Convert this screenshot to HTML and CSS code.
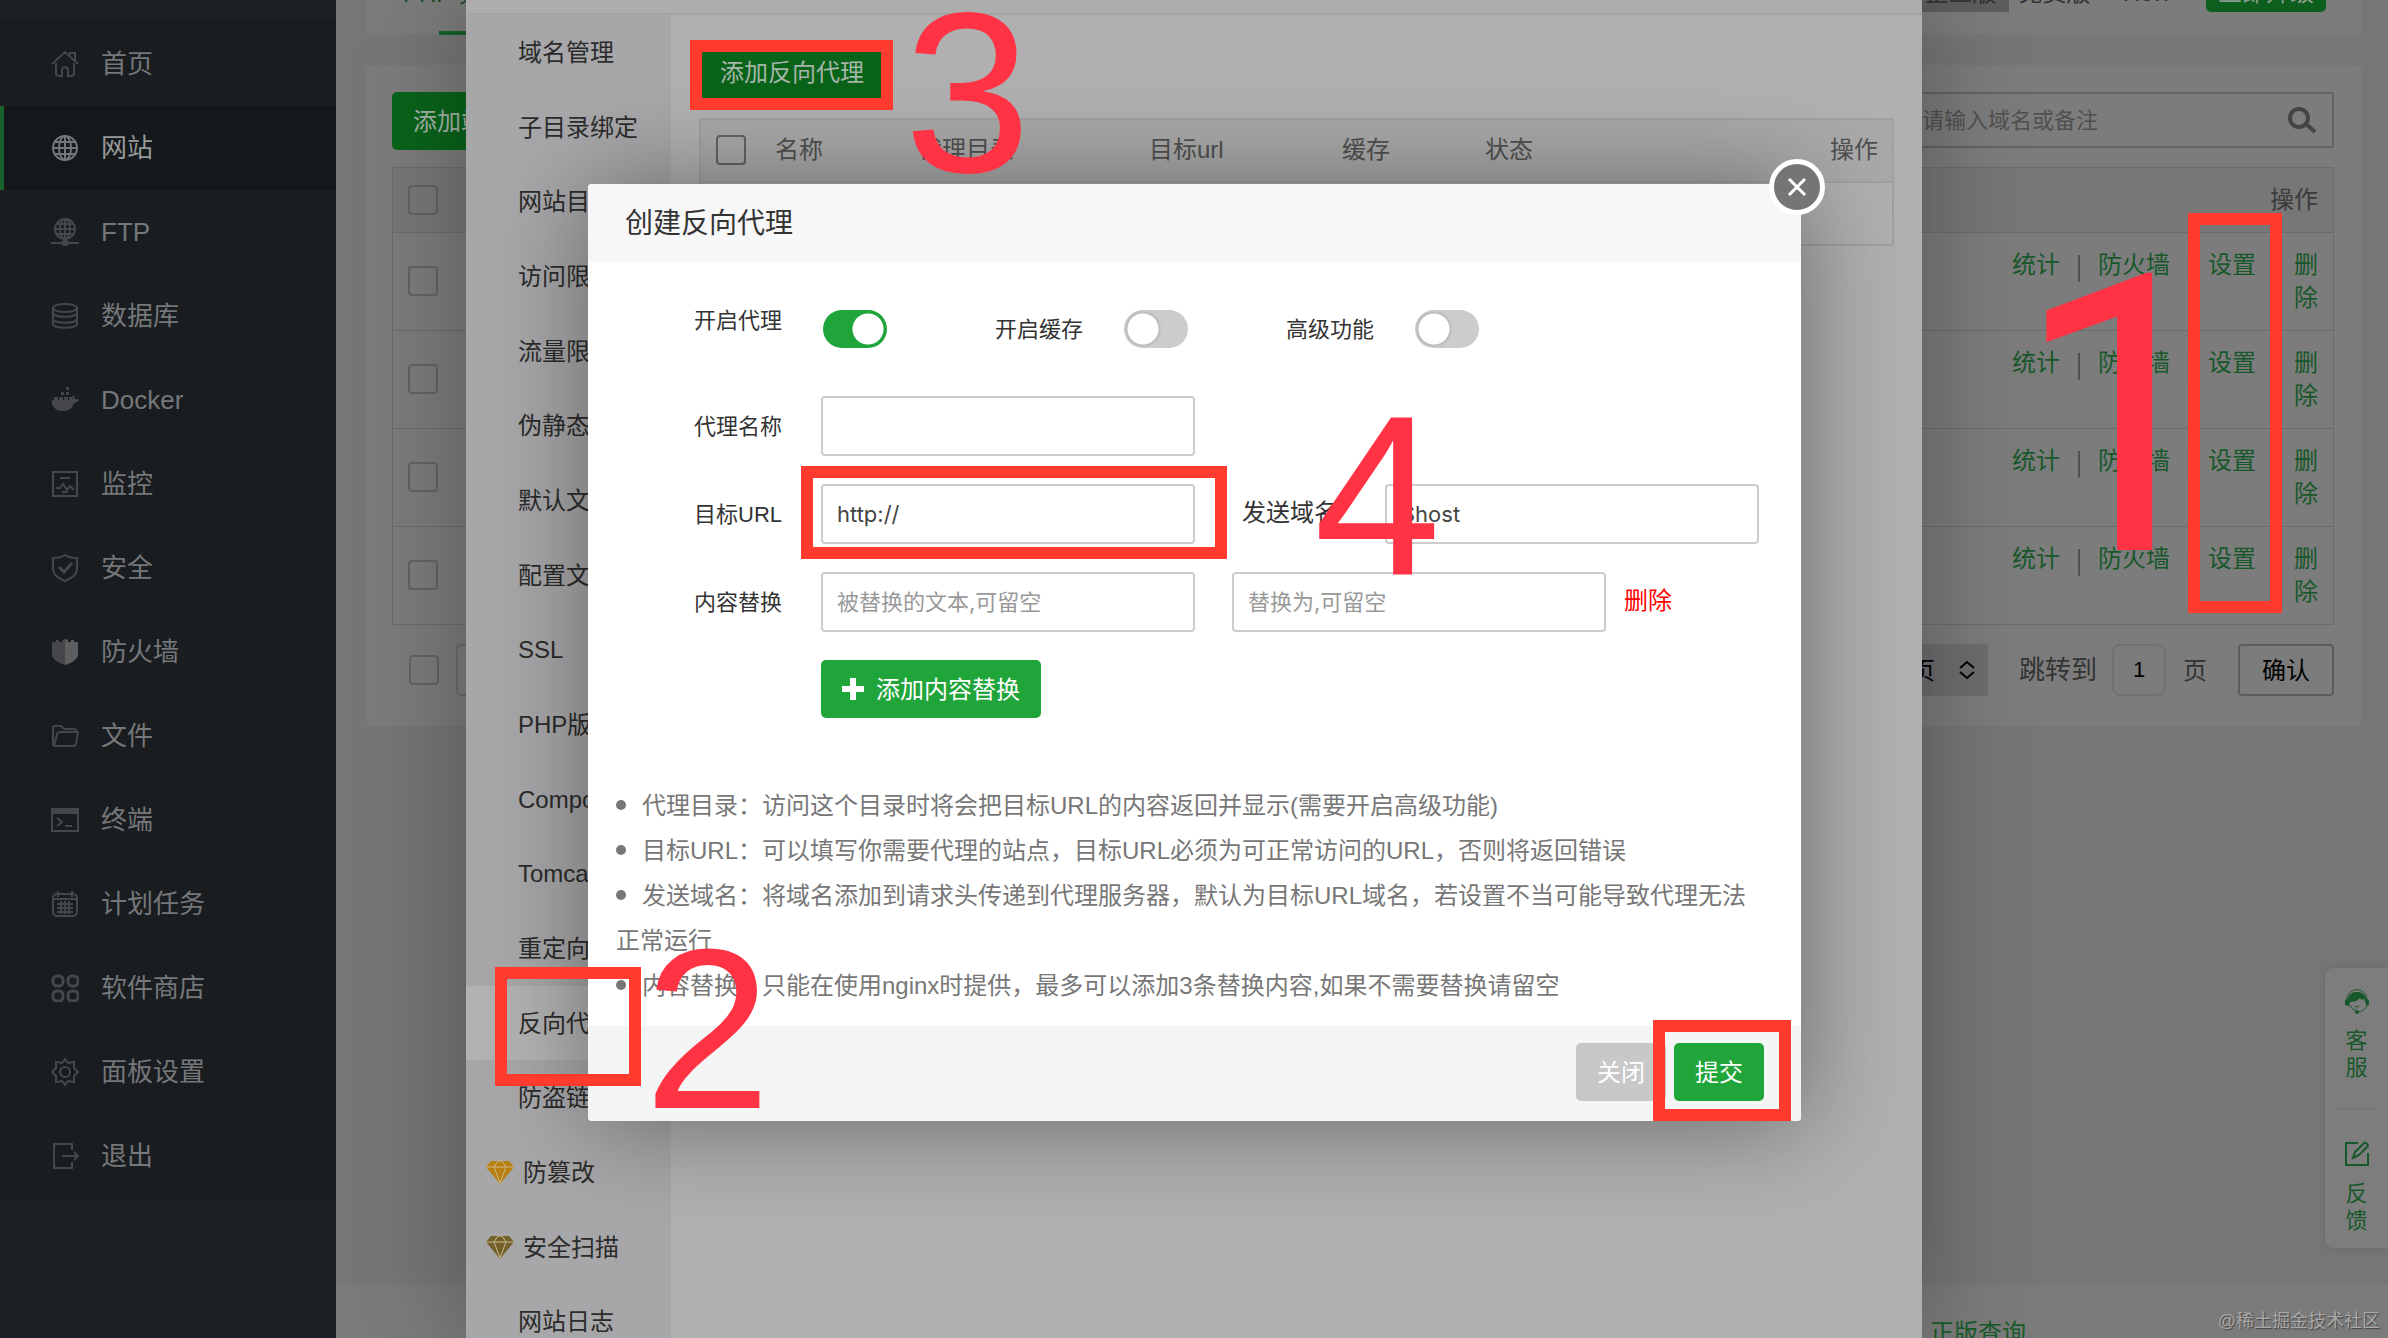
FILE: index.html
```html
<!DOCTYPE html>
<html lang="zh-CN">
<head>
<meta charset="utf-8">
<title>网站 - 反向代理</title>
<link rel="stylesheet" href="styles.css">
</head>
<body>
<div class="screen">
  <nav class="sidebar">
    <a class="nav" href="#"><svg viewBox="0 0 28 28"><path d="M1 14 14 2l13 12M5 13v10q0 3 3 3h3v-7q3-4 6 0v7h3q3 0 3-3V13M19 5V3h5v8"/></svg>首页</a>
    <a class="nav active" href="#"><svg viewBox="0 0 28 28"><circle cx="14" cy="14" r="12"/><ellipse cx="14" cy="14" rx="6" ry="12"/><path d="M2 14h24M14 2v24M4 8h20M4 20h20"/></svg>网站</a>
    <a class="nav" href="#"><svg viewBox="0 0 28 28"><circle cx="14" cy="11" r="10"/><ellipse cx="14" cy="11" rx="5" ry="10"/><path d="M4 11h20M14 1v20M6 6h16M6 16h16M0 25h28"/><ellipse class="fill" cx="14" cy="25" rx="4" ry="3"/></svg>FTP</a>
    <a class="nav" href="#"><svg viewBox="0 0 28 28"><ellipse cx="14" cy="6" rx="12" ry="4"/><path d="M2 6v16c0 5 24 5 24 0V6M2 11c0 5 24 5 24 0M2 17c0 5 24 5 24 0"/></svg>数据库</a>
    <a class="nav" href="#"><svg viewBox="0 0 28 28"><path class="fill" d="M1 14h20c1-2 0-4 1-5 2 1 2 3 2 4 2 0 3 0 4 1-1 2-3 3-5 3-2 6-6 8-11 8C4 25 0 20 1 14ZM3 11h4v4H3zM8 11h4v4H8zM13 11h4v4h-4zM10 6h3v3h-3zM15 6h3v3h-3zM15 1h3v3h-3zM18 11h3v4h-3z"/></svg>Docker</a>
    <a class="nav" href="#"><svg viewBox="0 0 28 28"><path d="M2 2h24v24H2zM9 8h10M5 18h4l3-4 4 6 3-4 4 4M11 22h6"/></svg>监控</a>
    <a class="nav" href="#"><svg viewBox="0 0 28 28"><path d="M14 1c4 3 8 3 12 3v10c0 7-5 10-12 13C7 24 2 21 2 14V4c4 0 8 0 12-3Z"/><path class="thick" d="m8 13 5 5 8-9"/></svg>安全</a>
    <a class="nav" href="#"><svg viewBox="0 0 28 28"><path class="fill" d="M1 4h4V2h3v2h3V2l3-1v26C8 25 1 22 1 16Z"/><path class="fill bright" d="M14 1l3 1v2h3V2h3v2h4v12c0 6-7 9-13 11Z"/></svg>防火墙</a>
    <a class="nav" href="#"><svg viewBox="0 0 28 28"><path d="M2 22V6q0-2 2-2h6l3 3h10q2 0 2 2M2 22c0 2 1 2 3 2h17q2 0 3-2l2-12H9q-2 0-3 2L3 24"/></svg>文件</a>
    <a class="nav" href="#"><svg viewBox="0 0 28 28"><path d="M1 3h26v22H1z"/><path class="fill" d="M1 2h26v6H1z"/><path d="m6 12 5 4-5 4M14 20h7"/></svg>终端</a>
    <a class="nav" href="#"><svg viewBox="0 0 28 28"><rect x="2" y="4" width="24" height="22" rx="4"/><path d="M2 9h24M7 1v6M21 1v6M6 14h16M6 18h16M6 22h16M10 11v13M14 11v13M18 11v13"/></svg>计划任务</a>
    <a class="nav" href="#"><svg class="thick" viewBox="0 0 28 28"><rect x="2" y="2" width="10" height="10" rx="4"/><rect x="17" y="2" width="10" height="10" rx="4"/><rect x="2" y="17" width="10" height="10" rx="4"/><rect x="17" y="17" width="10" height="10" rx="4"/></svg>软件商店</a>
    <a class="nav" href="#"><svg viewBox="0 0 28 28"><path d="m14 1 3 4 6-1 0 6 4 4-4 4 0 6-6-1-3 4-3-4-6 1 0-6-4-4 4-4 0-6 6 1Z"/><circle cx="14" cy="14" r="5"/></svg>面板设置</a>
    <a class="nav" href="#"><svg viewBox="0 0 28 28"><path d="M21 8V2H3v24h18v-6M11 14h16M23 10l4 4-4 4"/></svg>退出</a>
  </nav>

  <main class="main">
    <header class="topcard">
      <a class="tab" href="#">PHP项目</a>
      <div class="edition"><span class="badge">企业版</span><span>免费版</span><span class="ver">7.9.7</span><button class="upgrade">立即升级</button></div>
    </header>
    <section class="card">
      <div class="toolbar">
        <button class="btn dim">添加站点</button>
        <div class="search"><input type="text" aria-label="搜索" placeholder="请输入域名或备注"><svg viewBox="0 0 28 28"><circle cx="11" cy="12" r="9"/><path d="m18 18 9 8"/></svg></div>
      </div>
      <table class="sites">
        <thead><tr><th><input type="checkbox" aria-label="全选"></th><th class="right">操作</th></tr></thead>
        <tbody>
          <tr><td><input type="checkbox" aria-label="选择"></td><td><div class="ops"><a href="#">统计</a><i>|</i><a href="#">防火墙</a><i>|</i><a href="#">设置</a><i>|</i><a class="del" href="#">删除</a></div></td></tr>
          <tr><td><input type="checkbox" aria-label="选择"></td><td><div class="ops"><a href="#">统计</a><i>|</i><a href="#">防火墙</a><i>|</i><a href="#">设置</a><i>|</i><a class="del" href="#">删除</a></div></td></tr>
          <tr><td><input type="checkbox" aria-label="选择"></td><td><div class="ops"><a href="#">统计</a><i>|</i><a href="#">防火墙</a><i>|</i><a href="#">设置</a><i>|</i><a class="del" href="#">删除</a></div></td></tr>
          <tr><td><input type="checkbox" aria-label="选择"></td><td><div class="ops"><a href="#">统计</a><i>|</i><a href="#">防火墙</a><i>|</i><a href="#">设置</a><i>|</i><a class="del" href="#">删除</a></div></td></tr>
        </tbody>
      </table>
      <div class="pager">
        <input type="checkbox" aria-label="全选">
        <select class="batch" aria-label="批量操作"><option></option></select>
        <button class="size">页<svg viewBox="0 0 16 20"><path d="m1 8 7-6 7 6M1 12l7 6 7-6"/></svg></button>
        <label for="page">跳转到</label><input class="page" id="page" type="text" value="1"><span class="unit">页</span>
        <button class="confirm">确认</button>
      </div>
    </section>
    <footer class="foot"><a href="#">正版查询</a></footer>
  </main>

  <aside class="float">
    <a href="#"><svg viewBox="0 0 26 26"><path class="fill" d="M4 10C6 5 9 4 13 4s7 1 9 6l3 2v5l-3 1c0-3-1-5-2-7-2 1-3 1-4-1-3 3-6 4-10 4l-1 4-4-1v-5Z"/><path class="thin" d="M3 10C6-1 20-1 23 10M23 17c-1 4-5 7-10 7M6 17c1 3 3 5 6 5M11 18q2 2 4 0"/><circle class="fill" cx="13" cy="24" r="2"/></svg><span>客服</span></a>
    <a href="#"><svg viewBox="0 0 26 26"><path d="M14 2H2v22h22V12M9 17l2-6 9-9q3-1 4 3l-9 9Z"/></svg><span>反馈</span></a>
  </aside>

  <section class="site-dialog">
    <div class="bar"></div>
    <div class="cols">
      <nav class="menu">
        <a href="#">域名管理</a><a href="#">子目录绑定</a><a href="#">网站目录</a><a href="#">访问限制</a><a href="#">流量限制</a><a href="#">伪静态</a><a href="#">默认文档</a><a href="#">配置文件</a><a href="#">SSL</a><a href="#">PHP版本</a><a href="#">Composer</a><a href="#">Tomcat</a><a href="#">重定向</a><a class="on" href="#">反向代理</a><a href="#">防盗链</a>
        <a class="vip" href="#"><svg viewBox="0 0 28 24"><path class="gold" d="M5 1h18l5 6-14 17L0 7Z"/><path d="M0 7h28M8 7l6 16 6-16-4-6h-4Z"/></svg>防篡改</a>
        <a class="vip" href="#"><svg viewBox="0 0 28 24"><path class="bronze" d="M5 1h18l5 6-14 17L0 7Z"/><path d="M0 7h28M8 7l6 16 6-16-4-6h-4Z"/></svg>安全扫描</a>
        <a href="#">网站日志</a>
      </nav>
      <div class="pane">
        <button class="btn dim">添加反向代理</button>
        <table class="proxies">
          <thead><tr><th class="c0"><input type="checkbox" aria-label="全选"></th><th class="c1">名称</th><th class="c2">代理目录</th><th class="c3">目标url</th><th class="c4">缓存</th><th class="c5">状态</th><th class="right">操作</th></tr></thead>
          <tbody><tr><td colspan="7"></td></tr></tbody>
        </table>
      </div>
    </div>
  </section>

  <section class="modal" role="dialog" aria-labelledby="mt">
    <h2 id="mt">创建反向代理</h2>
    <button class="close" aria-label="关闭"><svg viewBox="0 0 20 20"><path d="m2 2 16 16M18 2 2 18"/></svg></button>
    <form class="form">
      <div class="row switches">
        <label class="lab up" for="s1">开启代理</label><input class="switch" id="s1" type="checkbox" checked>
        <label class="lab l2" for="s2">开启缓存</label><input class="switch" id="s2" type="checkbox">
        <label class="lab l3" for="s3">高级功能</label><input class="switch" id="s3" type="checkbox">
      </div>
      <div class="row"><label class="lab" for="f1">代理名称</label><input class="field" id="f1" type="text"></div>
      <div class="row"><label class="lab" for="f2">目标URL</label><input class="field" id="f2" type="text" value="http://"><label class="host" for="f3">发送域名</label><input class="field" id="f3" type="text" value="$host"></div>
      <div class="row"><label class="lab" for="f4">内容替换</label><input class="field" id="f4" type="text" placeholder="被替换的文本,可留空"><input class="field second" type="text" aria-label="替换为" placeholder="替换为,可留空"><a class="remove" href="#">删除</a></div>
      <button class="btn add" type="button"><svg viewBox="0 0 22 22"><path d="M8 0h6v8h8v6h-8v8H8v-8H0V8h8Z"/></svg>添加内容替换</button>
    </form>
    <ul class="tips">
      <li>代理目录：访问这个目录时将会把目标URL的内容返回并显示(需要开启高级功能)</li>
      <li>目标URL：可以填写你需要代理的站点，目标URL必须为可正常访问的URL，否则将返回错误</li>
      <li>发送域名：将域名添加到请求头传递到代理服务器，默认为目标URL域名，若设置不当可能导致代理无法正常运行</li>
      <li>内容替换：只能在使用nginx时提供，最多可以添加3条替换内容,如果不需要替换请留空</li>
    </ul>
    <footer class="actions"><button class="btn gray">关闭</button><button class="btn">提交</button></footer>
  </section>

  <div class="marks">
    <div class="box b1"></div><div class="box b2"></div><div class="box b3"></div><div class="box b4"></div><div class="box b5"></div>
    <span class="num n1">1</span><span class="num n2">2</span><span class="num n3">3</span><span class="num n4">4</span>
  </div>
  <span class="credit">@稀土掘金技术社区</span>
</div>
</body>
</html>
```
FILE: styles.css
```css
* { box-sizing: border-box; }
body { margin: 0; font: 24px/33px "Liberation Sans", "Noto Sans CJK SC", sans-serif; color: #333; }
a { color: inherit; text-decoration: none; }
button, input, select { font: inherit; margin: 0; }
svg { fill: none; stroke: currentColor; stroke-width: 2; flex: none; }
.thick { stroke-width: 3; }
.thin { stroke-width: 1; }
.fill { fill: currentColor; stroke: none; }
table { width: 100%; border-collapse: collapse; }
th { font-weight: 400; text-align: left; }
.right { text-align: right; }
.screen { position: relative; display: flex; min-height: 100vh; overflow: hidden; background: #767676; }

input[type=checkbox]:not(.switch) { appearance: none; display: block; width: 30px; height: 30px; border: 2px solid #636363; border-radius: 4px; }

/* left navigation */
.sidebar { flex: 0 0 336px; padding-top: 22px; background: linear-gradient(#1b1f24 20px, #1a1d20 20px, #1a1d20 1200px, #1b1f24 1200px); font-size: 26px; }
.nav { display: flex; align-items: center; gap: 22px; height: 84px; padding-left: 47px; border-left: 4px solid transparent; color: #75777a; }
.nav svg { width: 28px; height: 28px; color: #45474a; }
.nav.active { border-color: #17612c; background: #14181b; color: #96989a; }
.nav.active svg { color: #747678; }
.bright { fill: #5c5e60; }

/* page behind the dialogs */
.main { flex: 1; min-width: 0; display: flex; flex-direction: column; }
.topcard { display: flex; align-items: flex-end; justify-content: space-between; height: 35px; margin: 0 26px 30px 30px; padding-left: 37px; background: #7c7c7c; overflow: hidden; }
.tab { padding: 0 0 25px; color: #1e4a2a; background: linear-gradient(#17612c, #17612c) 36px 100% / 80px 4px no-repeat; white-space: nowrap; }
.edition { display: flex; align-items: flex-end; padding: 0 36px 23px 0; }
.edition span { padding-bottom: 3px; }
.edition .badge { width: 96px; margin-right: 10px; text-align: center; background: #5e5e5e; }
.edition .ver { margin: 0 32px 0 30px; }
.upgrade { width: 120px; height: 40px; padding: 0; border: 0; border-radius: 5px; background: #0d5f1d; color: #8d9c8f; }
.card { margin: 0 26px 0 30px; padding: 27px 28px 30px 26px; border-radius: 6px; background: #7c7c7c; }
.toolbar { display: flex; justify-content: space-between; height: 75px; }
.btn { height: 58px; padding: 0 21px; border: 0; border-radius: 5px; background: #20a53a; color: #fff; white-space: nowrap; }
.btn.dim { background: #09641a; color: #a6b5a8; }
.search { display: flex; align-items: center; width: 480px; height: 56px; padding: 0 16px 0 66px; border: 2px solid #646464; border-radius: 3px; font-size: 22px; }
.search input { flex: 1; min-width: 0; padding: 0; border: 0; background: none; }
.search input::placeholder { color: #505050; opacity: 1; }
.search svg { width: 28px; height: 28px; color: #444; stroke-width: 4; }
.sites { color: #3b3b3b; border: 1px solid #6b6b6b; }
.sites th, .sites td { padding: 15px 15px 16px; border-bottom: 1px solid #6b6b6b; vertical-align: middle; }
.sites th { background: #777; }
.ops { display: flex; justify-content: flex-end; color: #17582a; }
.ops i { width: 38px; text-align: center; font-family: "Noto Sans CJK SC", sans-serif; font-style: normal; color: #444; }
.ops .del { width: 24px; }
.pager { display: flex; align-items: center; height: 52px; margin-top: 19px; padding-left: 17px; color: #333; font-size: 26px; }
.batch { width: 240px; height: 52px; margin: 0 auto 0 17px; border: 2px solid #6b6b6b; border-radius: 5px; appearance: none; background: none; }
.size { display: flex; align-items: center; justify-content: flex-end; gap: 24px; width: 120px; height: 52px; margin-right: 31px; padding: 0 13px; border: 0; border-radius: 4px; background: #6e6e70; font-size: 24px; }
.size svg { width: 16px; height: 20px; }
.page { width: 54px; height: 52px; margin: 0 17px 0 15px; padding: 0; border: 2px solid #727272; border-radius: 8px; background: none; text-align: center; font-size: 22px; }
.unit, .confirm { font-size: 24px; }
.confirm { width: 96px; height: 52px; margin-left: 31px; padding: 0; border: 2px solid #5c5c5c; border-radius: 4px; background: none; }
.foot { height: 53px; margin-top: auto; padding: 31px 0 0 1594px; background: #7b7b7b; color: #175c29; overflow: hidden; white-space: nowrap; }
.float { position: absolute; right: 0; top: 968px; width: 63px; height: 280px; padding: 20px 10px; border-radius: 8px 0 0 8px; background: #7d7d7d; box-shadow: 0 0 6px #666; color: #17582a; font-size: 22px; line-height: 27px; }
.float a { display: flex; flex-direction: column; align-items: center; gap: 13px; height: 120px; }
.float a + a { padding-top: 31px; border-top: 2px solid #777; height: 140px; }
.float svg { width: 26px; height: 26px; }
.float span { width: 22px; }

/* site settings dialog */
.site-dialog { position: absolute; left: 50%; top: 0; bottom: 0; width: 1456px; margin-left: -728px; background: #b0b0b0; box-shadow: 0 0 100px rgba(0,0,0,.3); overflow: hidden; }
.bar { height: 15px; background: #adadad; border-bottom: 2px solid #a4a4a4; }
.cols { display: flex; height: 1344px; }
.menu { flex: 0 0 205px; display: flex; flex-direction: column; background: #a7a7a9; color: #2b2b2b; overflow: hidden; }
.menu a { flex: 1; display: flex; align-items: center; padding-left: 52px; white-space: nowrap; }
.menu .on { background: #b2b2b2; }
.menu .vip { gap: 9px; padding-left: 20px; }
.vip svg { width: 28px; height: 24px; stroke: #c9b98f; stroke-width: 1; }
.vip .gold { fill: #b97f10; stroke: none; }
.vip .bronze { fill: #75602b; stroke: none; }
.pane { flex: 1; padding: 28px 28px 0; }
.pane .btn { width: 184px; border-radius: 4px; }
.proxies { margin-top: 17px; border: 2px solid #a0a0a0; color: #505050; table-layout: fixed; }
.proxies th { height: 63px; padding: 0 14px 2px 0; background: #a9a9a9; border-bottom: 2px solid #a0a0a0; }
.proxies td { height: 63px; }
.proxies input { margin-left: 15px; }
.proxies .c0 { width: 75px; }
.proxies .c1 { width: 143px; }
.proxies .c2 { width: 231px; }
.proxies .c3 { width: 193px; }
.proxies .c4 { width: 143px; }
.proxies .c5 { width: 200px; }

/* create dialog */
.modal { position: absolute; left: 50%; top: 184px; width: 1213px; margin-left: -606px; border-radius: 4px; background: #fff; box-shadow: 2px 2px 100px rgba(0,0,0,.4); }
.modal h2 { height: 78px; margin: 0; padding-left: 37px; border-radius: 4px 4px 0 0; background: #f7f7f7; font-size: 28px; font-weight: 400; line-height: 80px; }
.close { position: absolute; right: -24px; top: -25px; display: flex; align-items: center; justify-content: center; width: 56px; height: 56px; padding: 0; border: 5px solid #fff; border-radius: 50%; background: #757575; color: #fff; }
.close svg { width: 20px; height: 20px; stroke-width: 3; }
.form { padding: 38px 0 0 106px; }
.row { display: flex; align-items: center; height: 60px; margin-bottom: 28px; }
.switches { height: 58px; margin-bottom: 38px; }
.lab { width: 127px; font-size: 22px; }
.up { padding-bottom: 18px; }
.l2 { margin-left: 108px; }
.l3 { margin-left: 98px; }
.switch { appearance: none; width: 64px; height: 38px; margin-left: 2px; border-radius: 19px; background: radial-gradient(circle at 19px 19px, #fff 15px, #bbb 16px, #ccc 19px); }
.switch:checked { background: radial-gradient(circle at 45px 19px, #fff 15px, #20a53a 16px); }
.field { width: 374px; height: 60px; padding: 0 14px; border: 2px solid #ccc; border-radius: 4px; background: #fff; color: #444; font-family: Inter, "Noto Sans CJK SC", sans-serif; font-size: 22px; }
.field::placeholder { color: #999; opacity: 1; }
.host { width: 143px; margin-left: 47px; padding-bottom: 3px; }
.second { margin-left: 37px; }
.remove { margin-left: 18px; padding-bottom: 3px; color: #f00; }
.add { display: flex; align-items: center; gap: 12px; margin-left: 127px; }
.add svg { width: 22px; height: 22px; fill: #fff; stroke: none; }
.tips { margin: 0; padding: 65px 40px 18px 28px; list-style: none; color: #777; line-height: 45px; }
.tips li::before { content: ""; display: inline-block; width: 10px; height: 10px; margin-right: 16px; border-radius: 50%; background: #777; vertical-align: 4px; }
.actions { display: flex; justify-content: flex-end; gap: 8px; height: 95px; padding: 17px 37px 0; border-radius: 0 0 4px 4px; background: #f4f6f5; }
.btn.gray { background: #c8c8c8; }

/* numbered steps drawn over the page */
.marks { position: absolute; inset: 0; pointer-events: none; color: #ff3344; }
.box { position: absolute; border: 12px solid #ff3b30; }
.b1 { left: 2188px; top: 213px; width: 94px; height: 400px; }
.b2 { left: 495px; top: 967px; width: 146px; height: 119px; }
.b3 { left: 690px; top: 40px; width: 203px; height: 70px; }
.b4 { left: 801px; top: 466px; width: 426px; height: 93px; }
.b5 { left: 1653px; top: 1020px; width: 138px; height: 101px; }
.num { position: absolute; font-size: 228px; line-height: 228px; }
.n1 { left: 2014px; top: 224px; font-family: Roboto, sans-serif; font-size: 388px; line-height: 388px; }
.n2 { left: 644px; top: 915px; }
.n3 { left: 904px; top: -21px; }
.n4 { left: 1314px; top: 382px; }
.credit { position: absolute; right: 8px; bottom: 0; color: #a8a8a8; font-size: 18px; text-shadow: 1px 1px 1px #444; }
```
